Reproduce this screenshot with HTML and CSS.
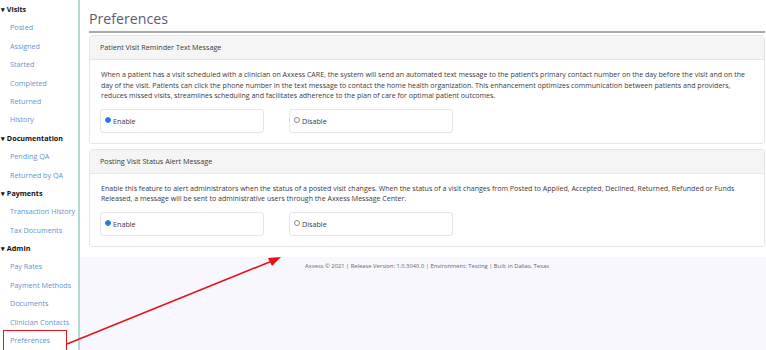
FILE: index.html
```html
<!DOCTYPE html>
<html>
<head>
<meta charset="utf-8">
<link rel="stylesheet" href="styles.css">
</head>
<body>
<div class="layout">
  <nav class="sidebar">
    <div class="group">▾ Visits</div>
    <a class="item">Posted</a>
    <a class="item">Assigned</a>
    <a class="item">Started</a>
    <a class="item">Completed</a>
    <a class="item">Returned</a>
    <a class="item">History</a>
    <div class="group">▾ Documentation</div>
    <a class="item">Pending QA</a>
    <a class="item">Returned by QA</a>
    <div class="group">▾ Payments</div>
    <a class="item">Transaction History</a>
    <a class="item">Tax Documents</a>
    <div class="group">▾ Admin</div>
    <a class="item">Pay Rates</a>
    <a class="item">Payment Methods</a>
    <a class="item">Documents</a>
    <a class="item">Clinician Contacts</a>
    <a class="item">Preferences</a>
  </nav>
  <main class="main">
    <section class="content">
      <h1 class="title">Preferences</h1>
      <div class="card">
        <div class="card-head">Patient Visit Reminder Text Message</div>
        <div class="card-body">
          <p class="desc">When a patient has a visit scheduled with a clinician on Axxess CARE, the system will send an automated text message to the patient’s primary contact number on the day before the visit and on the day of the visit. Patients can click the phone number in the text message to contact the home health organization. This enhancement optimizes communication between patients and providers, reduces missed visits, streamlines scheduling and facilitates adherence to the plan of care for optimal patient outcomes.</p>
          <div class="options">
            <label class="option"><span class="radio on"></span>Enable</label>
            <label class="option"><span class="radio"></span>Disable</label>
          </div>
        </div>
      </div>
      <div class="card">
        <div class="card-head">Posting Visit Status Alert Message</div>
        <div class="card-body">
          <p class="desc">Enable this feature to alert administrators when the status of a posted visit changes. When the status of a visit changes from Posted to Applied, Accepted, Declined, Returned, Refunded or Funds Released, a message will be sent to administrative users through the Axxess Message Center.</p>
          <div class="options">
            <label class="option"><span class="radio on"></span>Enable</label>
            <label class="option"><span class="radio"></span>Disable</label>
          </div>
        </div>
      </div>
    </section>
    <footer class="footer">Axxess © 2021 | Release Version: 1.0.3040.0 | Environment: Testing | Built in Dallas, Texas</footer>
  </main>
</div>
<div class="annot-box"></div>
<svg class="annot-arrow" width="766" height="350" viewBox="0 0 766 350">
  <line x1="67" y1="344" x2="272" y2="261" stroke="#e8121b" stroke-width="1.6"/>
  <polygon points="281,257 268,258 272,266" fill="#e8121b"/>
</svg>
</body>
</html>
```

FILE: styles.css
```css
* { box-sizing: border-box; }
html, body { margin: 0; padding: 0; }
body {
  width: 766px;
  height: 350px;
  overflow: hidden;
  font-family: "Open Sans", "Liberation Sans", sans-serif;
  color: #333;
  background: #fff;
  position: relative;
}
.layout {
  display: flex;
  height: 350px;
}
.sidebar {
  width: 80px;
  flex: 0 0 80px;
  border-right: 2px solid #b7d9d5;
  display: flex;
  flex-direction: column;
}
.group, .item {
  height: 18.4px;
  line-height: 18.4px;
  font-size: 7.2px;
  white-space: nowrap;
}
.group {
  font-weight: 700;
  color: #111;
  padding-left: 1px;
}
.item {
  color: #6394cf;
  padding-left: 10px;
}
.main {
  flex: 1;
  display: flex;
  flex-direction: column;
}
.content {
  background: #fff;
  padding: 8px 1px 5px 9px;
}
.title {
  margin: 0;
  font-size: 14.2px;
  font-weight: 400;
  color: #5c5b78;
  line-height: 20px;
  padding-top: 1px;
  border-bottom: 2px solid #a9a9a9;
  padding-bottom: 2px;
  margin-bottom: 2px;
}
.card {
  border: 1px solid #e6e6e6;
  border-radius: 3px;
  margin-bottom: 5px;
}
.card-head {
  background: #f5f5f5;
  border-bottom: 1px solid #e6e6e6;
  height: 24px;
  line-height: 23px;
  padding-left: 10px;
  font-size: 7.2px;
  color: #3a3a3a;
}
.card-body {
  padding: 9px 10px 10px 10px;
}
.desc {
  margin: 0 0 8px 1px;
  font-size: 7.05px;
  line-height: 10.6px;
  color: #3a3a3a;
}
.options {
  display: flex;
  gap: 25px;
}
.option {
  width: 164px;
  height: 24px;
  border: 1px solid #e6e6e6;
  border-radius: 3px;
  display: flex;
  align-items: center;
  padding-left: 4px;
  font-size: 7.2px;
  color: #3a3a3a;
}
.radio {
  width: 6px;
  height: 6px;
  border-radius: 50%;
  border: 1px solid #888;
  margin-right: 2px;
  margin-top: -2px;
  background: #fff;
}
.radio.on {
  border-color: #1a73e8;
  background: radial-gradient(circle, #1a73e8 55%, #8fb8f0 60%);
}
.footer {
  flex: 1;
  background: #f7f7fd;
  text-align: center;
  font-size: 5.8px;
  color: #666;
  padding-top: 5px;
  padding-left: 8px;
}
.annot-box {
  position: absolute;
  left: 3px;
  top: 330px;
  width: 64px;
  height: 22px;
  border: 1.5px solid #e8121b;
}
.annot-arrow {
  position: absolute;
  left: 0;
  top: 0;
  pointer-events: none;
}
```
